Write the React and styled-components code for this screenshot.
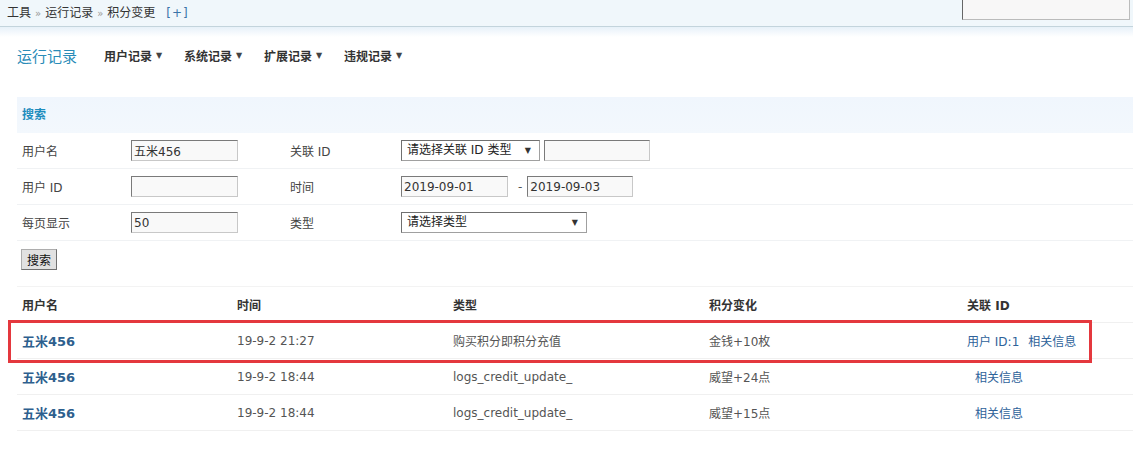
import React from "react";
import styled, { createGlobalStyle } from "styled-components";

const GlobalStyle = createGlobalStyle`
    body {
        margin: 0;
        background: #fff;
        color: #333;
        font: 12px "DejaVu Sans", "Noto Sans CJK SC", sans-serif;
    }
    input, select, button {
        font: 12px "DejaVu Sans", "Noto Sans CJK SC", sans-serif;
    }
`;

const menus = ["用户记录", "系统记录", "扩展记录", "违规记录"];

const rows = [
    {
        user: "五米456",
        time: "19-9-2 21:27",
        type: "购买积分即积分充值",
        change: "金钱+10枚",
        uid: "用户 ID:1",
        marked: true,
    },
    {
        user: "五米456",
        time: "19-9-2 18:44",
        type: "logs_credit_update_",
        change: "威望+24点",
    },
    {
        user: "五米456",
        time: "19-9-2 18:44",
        type: "logs_credit_update_",
        change: "威望+15点",
    },
];

const App = () => {
    return (
        <Page>
            <GlobalStyle />
            <TopBar>
                <Crumbs>
                    工具<Sep>»</Sep>运行记录<Sep>»</Sep>积分变更
                    <Plus>[+]</Plus>
                </Crumbs>
                <TopSearch />
            </TopBar>
            <Nav>
                <NavTitle>运行记录</NavTitle>
                {menus.map((m) => (
                    <NavItem key={m}>
                        {m}
                        <Arrow>▼</Arrow>
                    </NavItem>
                ))}
            </Nav>

            <Panel>
                <PanelHead>搜索</PanelHead>
                <FormRow>
                    <Label>用户名</Label>
                    <Cell>
                        <TextInput width={107} defaultValue="五米456" />
                    </Cell>
                    <Label>关联 ID</Label>
                    <Cell>
                        <SelectBox width={139}>
                            请选择关联 ID 类型<SelArrow>▼</SelArrow>
                        </SelectBox>
                        <TextInput width={106} />
                    </Cell>
                </FormRow>
                <FormRow>
                    <Label>用户 ID</Label>
                    <Cell>
                        <TextInput width={107} />
                    </Cell>
                    <Label>时间</Label>
                    <Cell>
                        <TextInput width={107} defaultValue="2019-09-01" />
                        <Dash>-</Dash>
                        <TextInput width={106} defaultValue="2019-09-03" />
                    </Cell>
                </FormRow>
                <FormRow>
                    <Label>每页显示</Label>
                    <Cell>
                        <TextInput width={107} defaultValue="50" />
                    </Cell>
                    <Label>类型</Label>
                    <Cell>
                        <SelectBox width={186}>
                            请选择类型<SelArrow>▼</SelArrow>
                        </SelectBox>
                    </Cell>
                </FormRow>
                <ButtonRow>
                    <SearchButton>搜索</SearchButton>
                </ButtonRow>
            </Panel>

            <Table>
                <HeadRow>
                    <Th>用户名</Th>
                    <Th>时间</Th>
                    <Th>类型</Th>
                    <Th>积分变化</Th>
                    <Th>关联 ID</Th>
                </HeadRow>
                {rows.map((r, i) => (
                    <Row key={i}>
                        <Td>
                            <UserLink>{r.user}</UserLink>
                        </Td>
                        <Td>{r.time}</Td>
                        <Td>{r.type}</Td>
                        <Td>{r.change}</Td>
                        <Td>
                            {r.uid && <Link>{r.uid}</Link>}
                            <Link indent={r.uid ? 9 : 8}>相关信息</Link>
                        </Td>
                        {r.marked && <Mark />}
                    </Row>
                ))}
            </Table>
        </Page>
    );
};

const Page = styled.div`
    width: 1133px;
    min-height: 462px;
    overflow: hidden;
`;
const TopBar = styled.div`
    display: flex;
    align-items: center;
    height: 26px;
    padding-left: 7px;
    background: #f0f7fb;
    border-bottom: 1px solid #c3d4dc;
`;
const Crumbs = styled.div`
    color: #333;
    font-size: 12px;
    line-height: 26px;
`;
const Sep = styled.span`
    color: #999;
    font-size: 10px;
    margin: 0 4px;
`;
const Plus = styled.span`
    color: #3a74a8;
    margin-left: 11px;
    letter-spacing: 1px;
`;
const TopSearch = styled.div`
    align-self: flex-start;
    margin: -2px 3px 0 auto;
    width: 166px;
    height: 20px;
    background: #f8f7f7;
    border: 1px solid #bbb;
    border-left-color: #666;
`;
const Nav = styled.div`
    display: flex;
    align-items: center;
    height: 56px;
    padding-left: 17px;
    background: linear-gradient(#e7f1f9, #fff 10px);
`;
const NavTitle = styled.span`
    color: #2a8cb8;
    font-size: 15px;
    margin-right: 27px;
`;
const NavItem = styled.span`
    display: inline-flex;
    align-items: center;
    width: 80px;
    font-weight: bold;
    color: #333;
`;
const Arrow = styled.span`
    font-size: 8px;
    margin-left: 4px;
    color: #444;
`;
const Panel = styled.div`
    margin: 14px 0 0 17px;
`;
const PanelHead = styled.div`
    height: 36px;
    line-height: 36px;
    padding-left: 5px;
    background: linear-gradient(#f0f6fd, #f3f8fd);
    color: #1e8dbd;
    font-weight: bold;
`;
const FormRow = styled.div`
    display: grid;
    grid-template-columns: 114px 154px 116px 1fr;
    align-items: center;
    height: 35px;
    border-bottom: 1px solid #f0f2f4;
`;
const Label = styled.div`
    padding-left: 5px;
    color: #444;
`;
const Cell = styled.div`
    display: flex;
    align-items: center;
    gap: 4px;
`;
const TextInput = styled.input`
    box-sizing: border-box;
    width: ${(props) => props.width}px;
    height: 21px;
    padding: 0 2px;
    background: #f9f9f9;
    color: #333;
    border: 1px solid #c8c8c8;
    border-top-color: #7a7a7a;
    border-left-color: #7a7a7a;
    outline: none;
`;
const SelectBox = styled.div`
    box-sizing: border-box;
    position: relative;
    width: ${(props) => props.width}px;
    height: 21px;
    line-height: 19px;
    padding-left: 5px;
    background: #fff;
    border: 1px solid #a0a0a0;
    border-top-color: #707070;
    border-left-color: #707070;
    color: #222;
`;
const SelArrow = styled.span`
    position: absolute;
    right: 8px;
    top: 0;
    font-size: 8px;
    color: #333;
`;
const Dash = styled.span`
    margin: 0 1px 0 6px;
    color: #555;
`;
const ButtonRow = styled.div`
    height: 45px;
    padding-left: 4px;
    padding-top: 8px;
    box-sizing: border-box;
`;
const SearchButton = styled.button`
    height: 21px;
    padding: 0 5px;
    background: #e1e1e1;
    border: 1px solid #adadad;
    border-right-color: #707070;
    border-bottom-color: #707070;
    color: #111;
`;
const Table = styled.div`
    margin-left: 17px;
`;
const HeadRow = styled.div`
    display: grid;
    grid-template-columns: 215px 216px 256px 258px 1fr;
    align-items: center;
    height: 35px;
    border-top: 1px solid #f3f3f3;
    border-bottom: 1px solid #f0f0f0;
`;
const Row = styled(HeadRow)`
    position: relative;
    border-top: none;
`;
const Th = styled.div`
    padding-left: 5px;
    font-weight: bold;
    color: #333;
`;
const Td = styled.div`
    padding-left: 5px;
    color: #555;
`;
const UserLink = styled.a`
    color: #2e5f8e;
    font-weight: bold;
    font-size: 13px;
`;
const Link = styled.a`
    color: #2e629a;
    margin-left: ${(props) => props.indent || 0}px;
`;
const Mark = styled.div`
    position: absolute;
    left: -9px;
    top: -3px;
    width: 1078px;
    height: 37px;
    border: 3px solid #e4383e;
    pointer-events: none;
`;

export default App;
